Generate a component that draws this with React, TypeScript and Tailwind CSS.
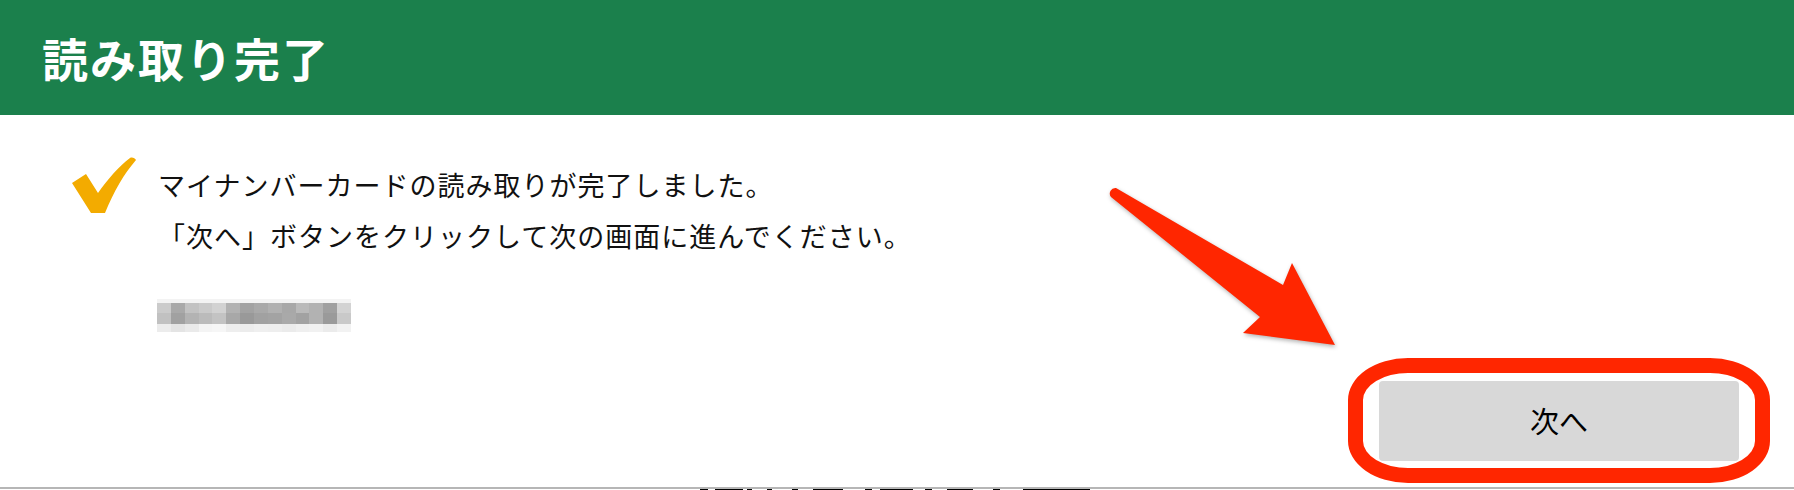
import React from "react";

const rowA = ["#cbcbcb", "#a9a9a9", "#c2c2c2", "#cacaca", "#d2d2d2", "#b2b2b2", "#a2a2a2", "#a9a9a9", "#b1b1b1", "#a8a8a8", "#bababa", "#b2b2b2", "#a0a0a0", "#d3d3d3"];
const rowB = ["#c1c1c1", "#a1a1a1", "#b3b3b3", "#bbbbbb", "#c3c3c3", "#a8a8a8", "#999999", "#a1a1a1", "#a3a3a3", "#a9a9a9", "#a2a2a2", "#b2b2b2", "#9a9a9a", "#c9c9c9"];
const rowC = ["#ececec", "#e4e4e4", "#eaeaea", "#f4f4f4", "#f6f6f6", "#eeeeee", "#ececec", "#efefef", "#eeeeee", "#ebebeb", "#efefef", "#f1f1f1", "#ebebeb", "#f2f2f2"];

const segments: [number, number][] = [
  [700, 8], [715, 28], [747, 5], [767, 5], [792, 6], [813, 30], [865, 7], [880, 33], [925, 7], [947, 26], [993, 7], [1023, 67],
];

function Check() {
  return (
    <svg width="64" height="57" viewBox="0 0 64 57" className="shrink-0">
      <path
        d="M0,26 L14,17 L26,36 C36,22 47,9 58,1 C60,0 63,1 64,3 C52,17 42,34 33,56 L19,56 Z"
        fill="#f3ab00"
      />
    </svg>
  );
}

function Arrow() {
  return (
    <svg
      width="245"
      height="175"
      viewBox="0 0 245 175"
      className="drop-shadow-[1px_2px_2px_rgba(0,0,0,0.3)]"
    >
      <path
        d="M16,8 L183,105 L192,83 L235,165 L143,153 L160,137 L11,17 A5.6,5.6 0 0 1 16,8 Z"
        fill="#ff2600"
      />
    </svg>
  );
}

function Mosaic() {
  return (
    <div className="flex flex-col w-[194px] ml-[-1px]">
      <div className="h-[4px] bg-[#f3f3f3]" />
      {[rowA, rowB, rowC].map((row, i) => (
        <div key={i} className={i === 2 ? "flex h-[8px]" : i === 0 ? "flex h-[10px]" : "flex h-[11px]"}>
          {row.map((c, j) => (
            <div key={j} className="flex-1" style={{ backgroundColor: c }} />
          ))}
        </div>
      ))}
    </div>
  );
}

export default function App() {
  return (
    <div
      className="w-[1794px] h-[490px] overflow-hidden bg-white flex flex-col"
      style={{ fontFamily: '"Noto Sans CJK JP", "Noto Sans", sans-serif' }}
    >
      <header className="h-[115px] shrink-0 bg-[#1b804c] flex items-center pl-[42px]">
        <h1 className="text-white text-[46px] font-bold leading-none tracking-[2px] -mt-[2px]">読み取り完了</h1>
      </header>

      <main className="relative h-[374px] shrink-0 border-b-2 border-[#b6b6b6] flex flex-col">
        <div className="flex pl-[72px] pt-[42px]">
          <Check />
          <div className="ml-[22px] mt-[2px] flex flex-col">
            <p className="text-[27px] leading-[51px] text-[#111] tracking-[1px]">
              マイナンバーカードの読み取りが完了しました。
            </p>
            <p className="text-[27px] leading-[51px] text-[#111] tracking-[1px]">
              「次へ」ボタンをクリックして次の画面に進んでください。
            </p>
            <div className="mt-[38px]">
              <Mosaic />
            </div>
          </div>
        </div>

        <div className="flex justify-end pr-[55px] mt-[49px]">
          <div className="relative">
            <button className="w-[360px] h-[80px] rounded-[4px] bg-[#d8d8d8] text-[29px] text-black flex items-center justify-center">
              次へ
            </button>
            <div className="absolute -left-[31px] -right-[31px] -top-[23px] -bottom-[22px] border-[15px] border-[#ff2600] rounded-[60px/42px] pointer-events-none" />
          </div>
        </div>

        <div className="absolute left-[1100px] top-[65px]">
          <Arrow />
        </div>
      </main>

      <div className="relative h-[1px]">
        {segments.map(([x, w], i) => (
          <div key={i} className="absolute top-0 h-[1px] bg-black" style={{ left: x, width: w }} />
        ))}
      </div>
    </div>
  );
}
